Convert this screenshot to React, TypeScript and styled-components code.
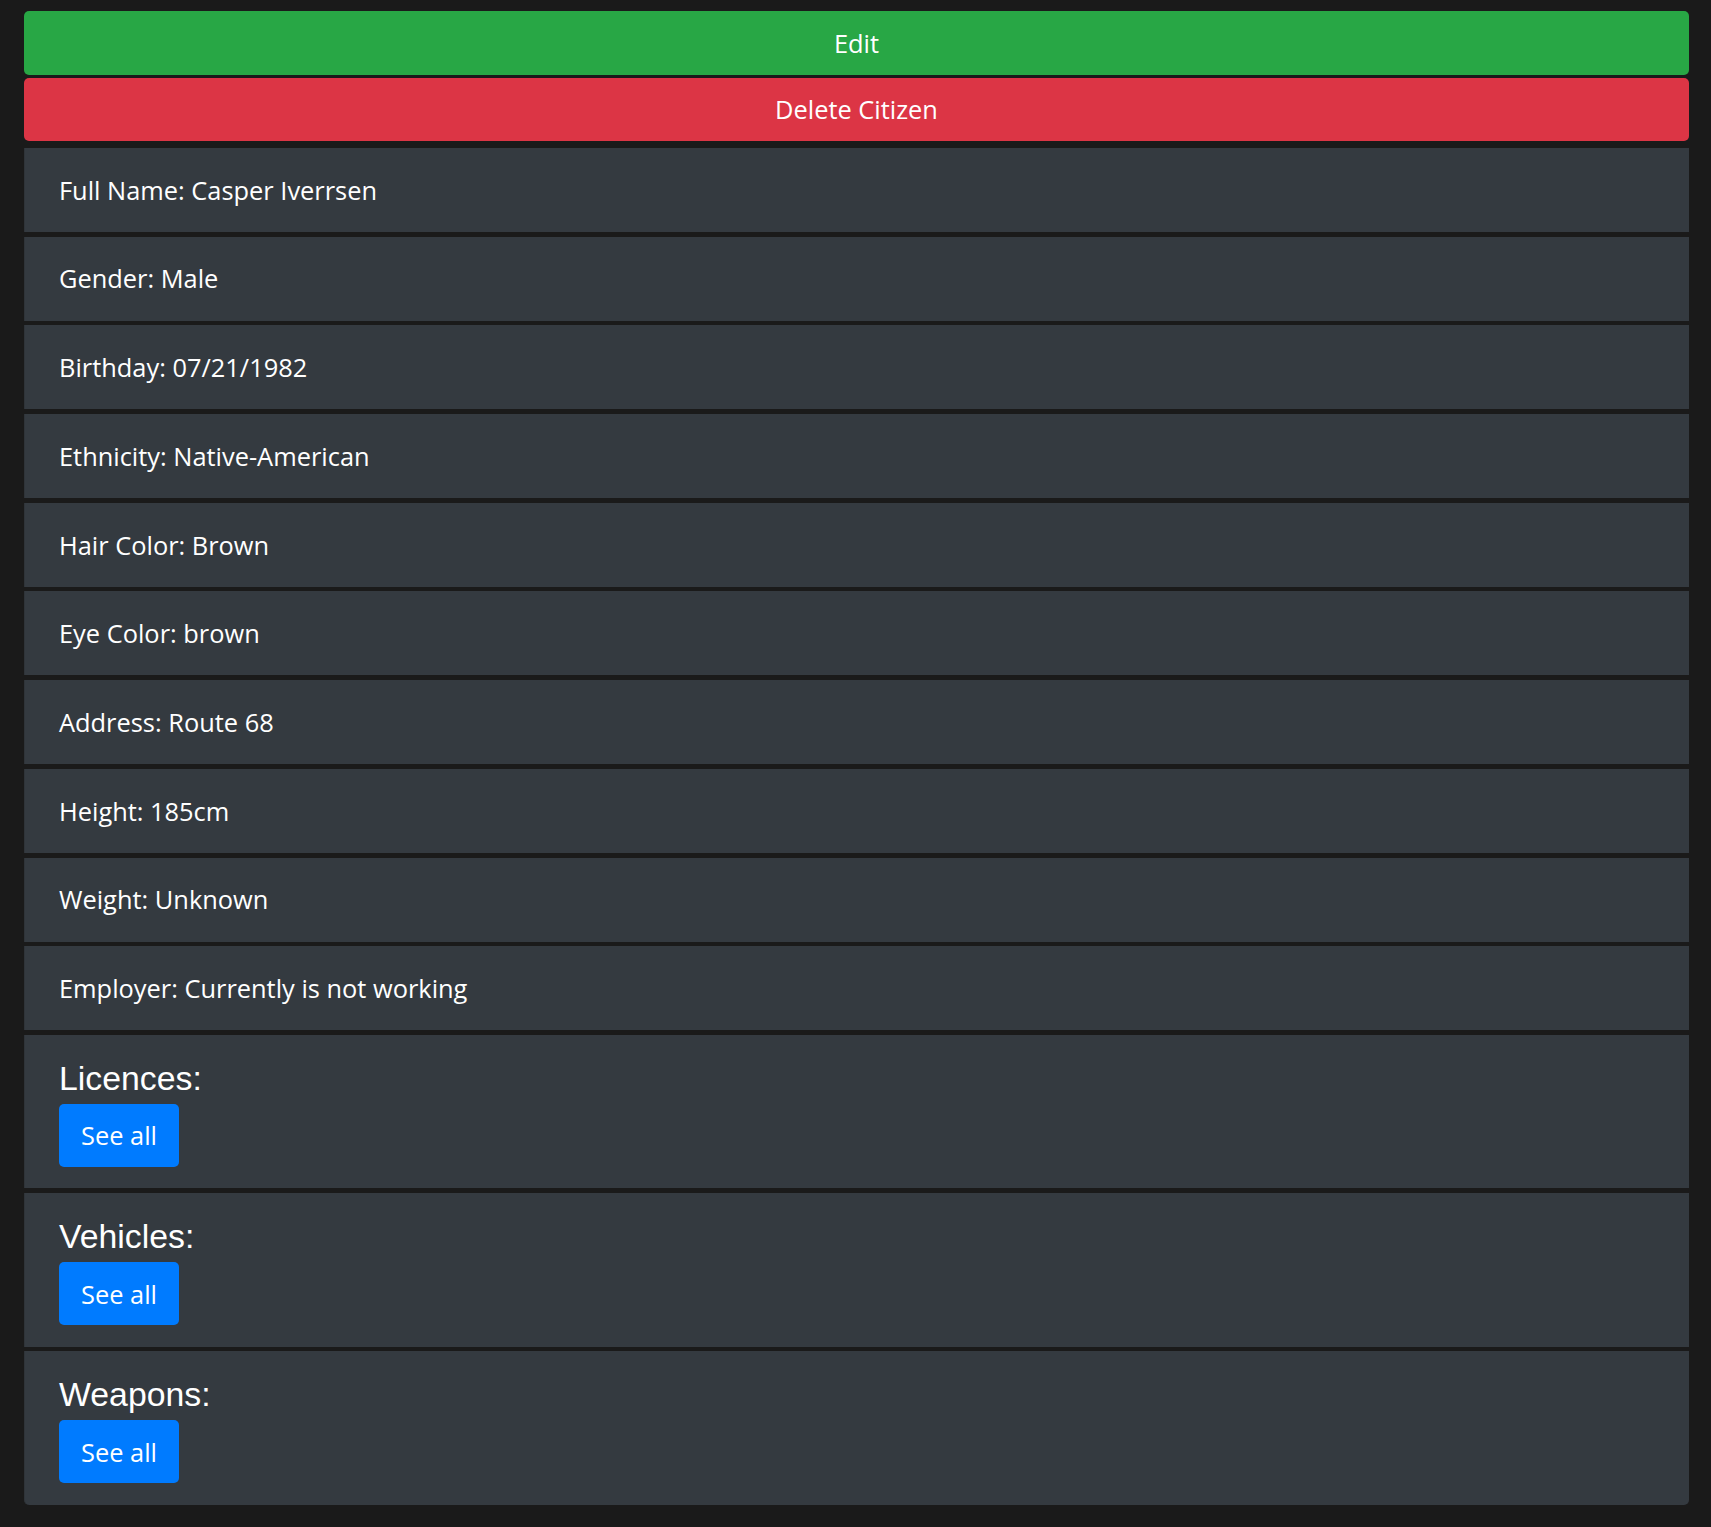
import React from "react";
import styled, { createGlobalStyle } from "styled-components";

const GlobalStyle = createGlobalStyle`
  html, body {
    margin: 0;
    padding: 0;
    background: #1a1a1a;
  }
  body {
    font-family: "Open Sans", "Noto Sans", sans-serif;
    color: #fff;
  }
`;

const Page = styled.div`
  padding: 11px 22px 21px 24px;
  display: flex;
  flex-direction: column;
`;

const ActionButton = styled.button<{ $variant: "success" | "danger" }>`
  display: block;
  width: 100%;
  height: 63.5px;
  border: none;
  border-radius: 5px;
  font-family: "Open Sans", "Noto Sans", sans-serif;
  font-size: 25.4px;
  color: #fff;
  background: ${(p) => (p.$variant === "success" ? "#28a745" : "#dc3545")};
  cursor: pointer;
  padding: 0;
  margin-bottom: ${(p) => (p.$variant === "success" ? "3px" : "7px")};
`;

const List = styled.div`
  display: flex;
  flex-direction: column;
  gap: 4.7px;
`;

const Item = styled.div`
  box-sizing: border-box;
  background: #343a40;
  border-left: 1px solid #2f3439;
  padding: 0 36px 0 34px;
  &:last-child {
    border-radius: 0 0 5px 5px;
  }
`;

const FieldItem = styled(Item)`
  height: 84px;
  display: flex;
  align-items: center;
  font-size: 25.4px;
  line-height: 1.2;
`;

const SectionItem = styled(Item)`
  height: 153.5px;
  padding-top: 23px;
  padding-bottom: 21px;
  display: flex;
  flex-direction: column;
  align-items: flex-start;
`;

const SectionTitle = styled.h4`
  margin: 0 0 6px 0;
  font-family: "Liberation Sans", Arial, sans-serif;
  font-weight: 400;
  font-size: 33.8px;
  line-height: 40px;
  color: #fff;
`;

const SeeAllButton = styled.button`
  height: 63px;
  padding: 0 22px;
  border: none;
  border-radius: 5px;
  background: #007bff;
  color: #fff;
  font-family: "Open Sans", "Noto Sans", sans-serif;
  font-size: 25.4px;
  cursor: pointer;
`;

const fields: [string, string][] = [
  ["Full Name", "Casper Iverrsen"],
  ["Gender", "Male"],
  ["Birthday", "07/21/1982"],
  ["Ethnicity", "Native-American"],
  ["Hair Color", "Brown"],
  ["Eye Color", "brown"],
  ["Address", "Route 68"],
  ["Height", "185cm"],
  ["Weight", "Unknown"],
  ["Employer", "Currently is not working"],
];

const sections = ["Licences", "Vehicles", "Weapons"];

export default function App() {
  return (
    <>
      <GlobalStyle />
      <Page>
        <ActionButton $variant="success">Edit</ActionButton>
        <ActionButton $variant="danger">Delete Citizen</ActionButton>
        <List>
          {fields.map(([label, value]) => (
            <FieldItem key={label}>
              {label}: {value}
            </FieldItem>
          ))}
          {sections.map((s) => (
            <SectionItem key={s}>
              <SectionTitle>{s}:</SectionTitle>
              <SeeAllButton>See all</SeeAllButton>
            </SectionItem>
          ))}
        </List>
      </Page>
    </>
  );
}
